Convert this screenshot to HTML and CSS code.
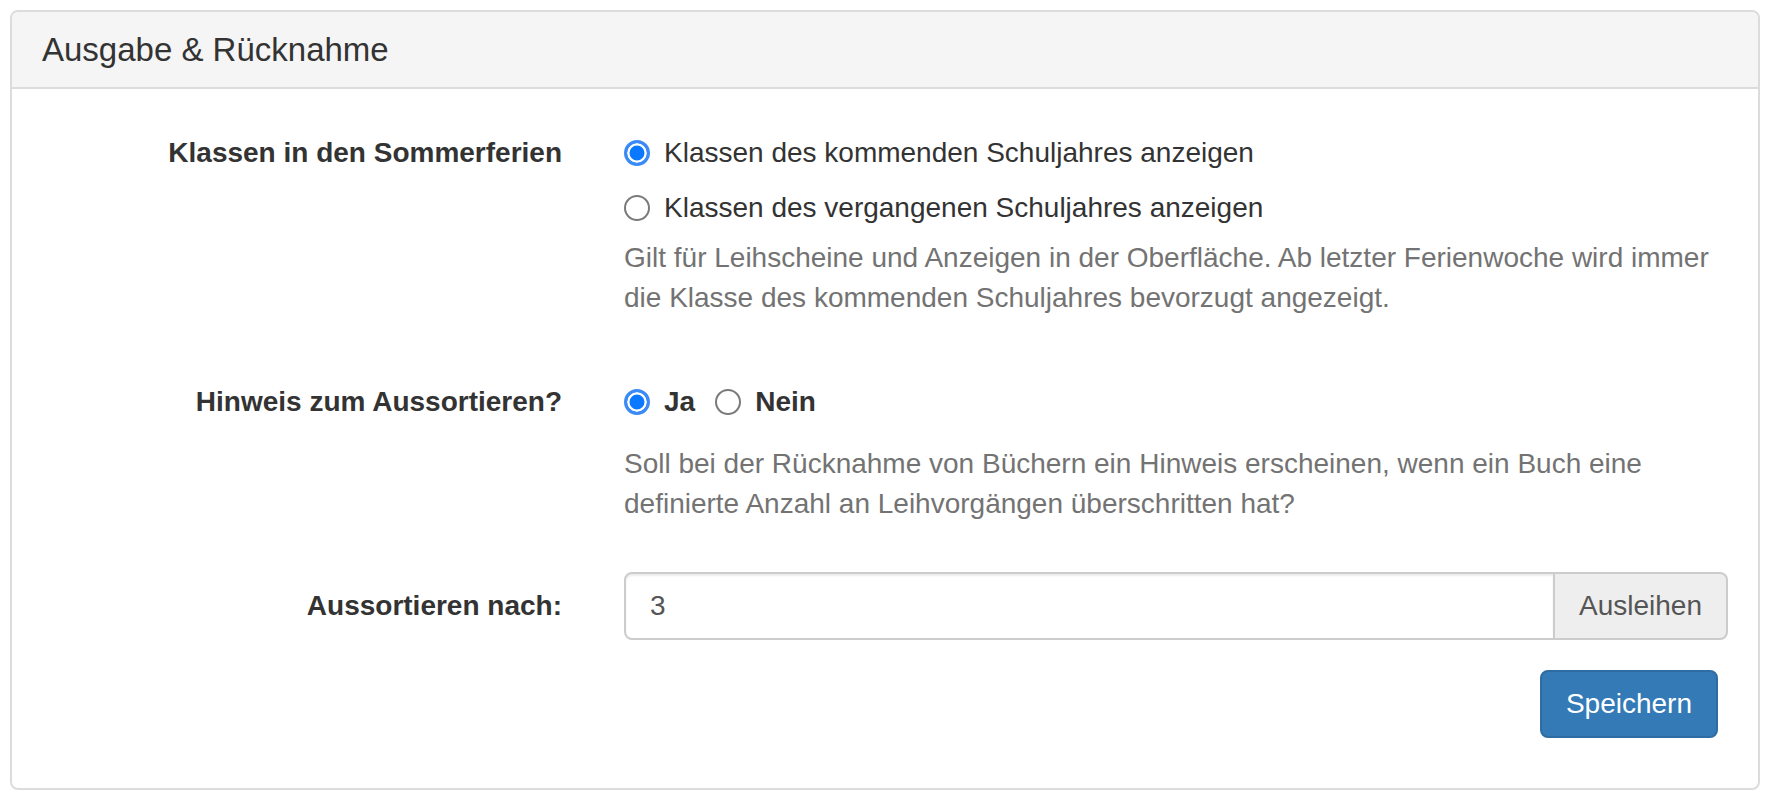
FILE: index.html
```html
<!DOCTYPE html>
<html lang="de">
<head>
  <meta charset="UTF-8" />
  <meta name="viewport" content="width=device-width, initial-scale=1.0" />
  <title>Ausgabe &amp; Rücknahme</title>
  <link rel="stylesheet" href="styles.css">
</head>
<body>
  <div class="panel">
    <div class="panel-heading">
      <h3 class="panel-title">Ausgabe &amp; Rücknahme</h3>
    </div>
    <form class="panel-body">
      <div class="form-group">
        <label class="control-label">Klassen in den Sommerferien</label>
        <div class="controls">
          <label class="radio">
            <input type="radio" name="klassen" checked>
            <span>Klassen des kommenden Schuljahres anzeigen</span>
          </label>
          <label class="radio second">
            <input type="radio" name="klassen">
            <span>Klassen des vergangenen Schuljahres anzeigen</span>
          </label>
          <p class="help-block">Gilt für Leihscheine und Anzeigen in der Oberfläche. Ab letzter Ferienwoche wird immer die Klasse des kommenden Schuljahres bevorzugt angezeigt.</p>
        </div>
      </div>

      <div class="form-group">
        <label class="control-label">Hinweis zum Aussortieren?</label>
        <div class="controls">
          <div class="inline-radios">
            <label class="radio-inline">
              <input type="radio" name="hinweis" checked>
              <span>Ja</span>
            </label>
            <label class="radio-inline">
              <input type="radio" name="hinweis">
              <span>Nein</span>
            </label>
          </div>
          <p class="help-block">Soll bei der Rücknahme von Büchern ein Hinweis erscheinen, wenn ein Buch eine definierte Anzahl an Leihvorgängen überschritten hat?</p>
        </div>
      </div>

      <div class="form-group">
        <label class="control-label">Aussortieren nach:</label>
        <div class="controls">
          <div class="input-group">
            <input type="text" class="form-control" value="3">
            <span class="input-group-addon">Ausleihen</span>
          </div>
        </div>
      </div>

      <div class="form-group actions">
        <button type="button" class="btn-primary">Speichern</button>
      </div>
    </form>
  </div>
</body>
</html>
```

FILE: styles.css
```css
body {
  margin: 10px;
  font-family: 'Liberation Sans', Arial, sans-serif;
  font-size: 28px;
  line-height: 40px;
  color: #333;
  background: #fff;
}
.panel {
  border: 2px solid #dcdcdc;
  border-radius: 8px;
  background: #fff;
}
.panel-heading {
  background: #f5f5f5;
  border-bottom: 2px solid #dcdcdc;
  border-radius: 6px 6px 0 0;
  padding: 20px 30px;
}
.panel-title {
  margin: 0;
  font-size: 33px;
  font-weight: 500;
  line-height: 35px;
  color: #333;
}
.panel-body {
  padding: 30px 30px 30px;
  margin: 0;
}
.form-group {
  display: grid;
  grid-template-columns: 520px 1fr;
  column-gap: 62px;
  margin-bottom: 30px;
}
.control-label {
  text-align: right;
  font-weight: bold;
  padding-top: 14px;
}
.controls {
  min-width: 0;
}
.radio,
.radio-inline {
  display: flex;
  align-items: center;
  cursor: pointer;
}
.radio {
  padding-top: 14px;
}
.radio.second {
  padding-top: 15px;
}
.inline-radios {
  display: flex;
  padding-top: 14px;
  gap: 20px;
}
.radio-inline span {
  font-weight: bold;
}
input[type="radio"] {
  appearance: none;
  -webkit-appearance: none;
  width: 26px;
  height: 26px;
  margin: 0 14px 0 0;
  border: 2px solid #7a7a7a;
  border-radius: 50%;
  background: #fff;
  flex-shrink: 0;
}
input[type="radio"]:checked {
  border: 3px solid #3b8af5;
  background: #0b79ff;
  box-shadow: inset 0 0 0 2.5px #fff;
}
.help-block {
  margin: 10px 0 20px;
  color: #737373;
}
.inline-radios + .help-block {
  margin-top: 22px;
  margin-bottom: 18px;
}
.input-group {
  display: flex;
  height: 68px;
}
.form-control {
  flex: 1;
  min-width: 0;
  height: 68px;
  box-sizing: border-box;
  padding: 0 24px;
  border: 2px solid #ccc;
  border-radius: 8px 0 0 8px;
  font-family: inherit;
  font-size: 28px;
  color: #555;
  box-shadow: inset 0 2px 2px rgba(0, 0, 0, 0.075);
  outline: none;
}
.input-group-addon {
  display: flex;
  align-items: center;
  padding: 0 24px;
  background: #eee;
  border: 2px solid #ccc;
  border-left: none;
  border-radius: 0 8px 8px 0;
  color: #555;
}
.actions {
  display: flex;
  justify-content: flex-end;
  margin-bottom: 20px;
  padding-right: 10px;
}
.btn-primary {
  height: 68px;
  padding: 0 24px;
  background: #337ab7;
  border: 2px solid #2e6da4;
  border-radius: 8px;
  color: #fff;
  font-family: inherit;
  font-size: 28px;
  cursor: pointer;
}
```
